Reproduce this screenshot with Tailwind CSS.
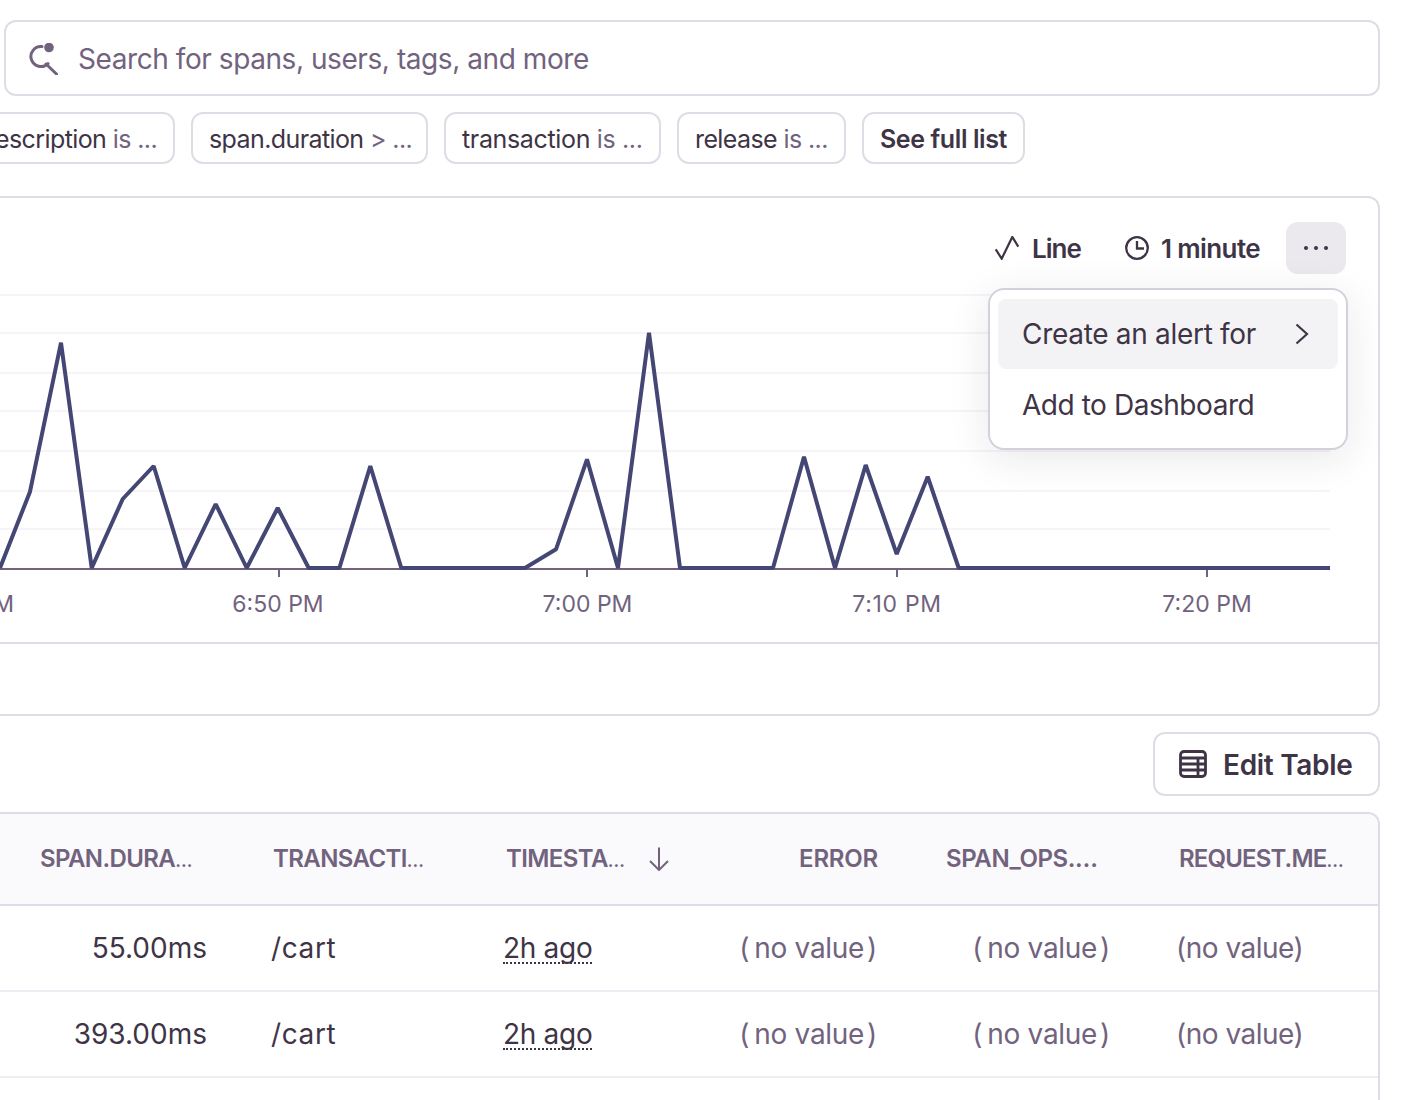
<!DOCTYPE html>
<html>
<head>
<meta charset="utf-8">
<script src="https://cdn.jsdelivr.net/npm/@tailwindcss/browser@4"></script>
</head>
<body class="bg-white">
<div class="relative w-[1428px] h-[1100px] overflow-hidden bg-white pt-5 pr-12 font-[Inter,sans-serif] text-[#3e3446] flex flex-col">
  <div class="ml-1 h-[76px] shrink-0 border-2 border-[#e0dce5] rounded-xl flex items-center pl-[22px] text-[28px] text-[#71637e] tracking-[-0.43px]">
    <svg class="w-[30px] h-[32px] mr-[20px] mt-[1px]" viewBox="0 0 30 32" fill="none" stroke="#71637e" stroke-width="3" stroke-linecap="round"><path d="M14 3.6A10 10 0 1 0 20 20.6"/><path d="M18 21 28.5 31"/><circle cx="21" cy="4.5" r="4.8" fill="#71637e" stroke="none"/></svg>
    <span class="relative top-[1px]">Search for spans, users, tags, and more</span>
  </div>
  <div class="mt-4 mr-[355px] h-[52px] shrink-0 flex justify-end gap-4 text-[25px] leading-[48px]">
    <div class="w-[300px] shrink-0 border-2 border-[#e0dce5] rounded-xl flex items-center justify-end pr-4 pt-[1px] whitespace-nowrap tracking-[-0.6px]"><span>description&nbsp;</span><span class="text-[#71637e]">is ...</span></div>
    <div class="w-[237px] shrink-0 border-2 border-[#e0dce5] rounded-xl flex items-center pl-4 pt-[1px] whitespace-nowrap tracking-[-0.6px]"><span>span.duration&nbsp;</span><span class="text-[#71637e]">&gt; ...</span></div>
    <div class="w-[217px] shrink-0 border-2 border-[#e0dce5] rounded-xl flex items-center pl-4 pt-[1px] whitespace-nowrap tracking-[-0.35px]"><span>transaction&nbsp;</span><span class="text-[#71637e]">is ...</span></div>
    <div class="w-[169px] shrink-0 border-2 border-[#e0dce5] rounded-xl flex items-center pl-4 pt-[1px] whitespace-nowrap tracking-[-0.6px]"><span>release&nbsp;</span><span class="text-[#71637e]">is ...</span></div>
    <div class="w-[163px] shrink-0 border-2 border-[#e0dce5] rounded-xl flex items-center justify-center pt-[1px] whitespace-nowrap font-semibold tracking-[-0.4px]">See full list</div>
  </div>
  <div class="relative mt-8 -ml-5 h-[520px] shrink-0 border-2 border-[#e0dce5] rounded-xl flex flex-col">
    <div class="h-[92px] shrink-0 flex justify-end items-start pt-6 pr-8 text-[26px] font-semibold">
      <div class="h-[52px] flex items-center gap-[13px]"><svg class="w-6 h-6" viewBox="0 0 24 24" fill="none" stroke="#3e3446" stroke-width="2.2"><path d="M0.7 13.3 6.7 22.7 17.3 0.9 23.3 10.7"/></svg><span class="tracking-[-1px]">Line</span></div>
      <div class="ml-[44px] h-[52px] flex items-center gap-3"><svg class="w-6 h-6" viewBox="0 0 24 24" fill="none" stroke="#3e3446" stroke-width="2.3"><circle cx="12" cy="12" r="10.8"/><path d="M12 5V12.5H19"/></svg><span class="tracking-[-0.6px]">1 minute</span></div>
      <div class="ml-[26px] w-[60px] h-[52px] rounded-xl bg-[#ebe9ee] flex items-center justify-center gap-[6px]"><i class="w-1 h-1 rounded-full bg-[#3e3446]"></i><i class="w-1 h-1 rounded-full bg-[#3e3446]"></i><i class="w-1 h-1 rounded-full bg-[#3e3446]"></i></div>
    </div>
    <svg class="block shrink-0" width="1396" height="352" viewBox="-18 290 1396 352" fill="none" font-size="23" style="font-family:Inter,sans-serif">
      <g stroke="#f6f4f8" stroke-width="2">
        <path d="M-18 295H1330M-18 333H1330M-18 373H1330M-18 411H1330M-18 451H1330M-18 491H1330M-18 529H1330"/>
      </g>
      <path d="M-18 569H1330M279 569V577M587 569V577M897 569V577M1207 569V577" stroke="#71637e" stroke-width="2"/>
      <polyline stroke="#444674" stroke-width="4" stroke-linejoin="bevel" points="0,568 30,491.7 61,342.7 91.7,568 122.7,499 153.7,466 184.7,568 215.7,504 246.7,568 277.7,508 308.7,568 339.4,568 370.3,466 401.3,568 525,568 556,549.3 587,459.3 618,568 649,332.7 680,568 773,568 804,456.7 835,568 865.7,465 896.7,554 927.7,476.7 958.7,568 1330,568"/>
      <g fill="#71637e" text-anchor="middle">
        <text x="-32" y="612">6:40 PM</text>
        <text x="278" y="612">6:50 PM</text>
        <text x="587.5" y="612">7:00 PM</text>
        <text x="897" y="612" class="tracking-[0.7px]">7:10 PM</text>
        <text x="1207" y="612">7:20 PM</text>
      </g>
    </svg>
    <div class="flex-1 border-t-2 border-[#e0dce5]"></div>
    <div class="absolute left-[1006px] top-[90px] w-[360px] h-[162px] bg-white border-2 border-[#d5d0dc] rounded-2xl px-2 py-[9px] shadow-[0_8px_40px_rgba(43,34,51,0.10)] text-[28px] tracking-[-0.3px]">
      <div class="h-[70px] rounded-lg bg-[#f3f2f5] flex items-center justify-between pl-[24px] pr-[29px]">
        <span>Create an alert for</span>
        <svg class="w-[14px] h-[22px]" viewBox="0 0 14 22" fill="none" stroke="#3e3446" stroke-width="2.2"><path d="M1.5 1.5 12 11 1.5 20.5"/></svg>
      </div>
      <div class="h-[71px] flex items-center pl-[24px]"><span class="tracking-[-0.45px]">Add to Dashboard</span></div>
    </div>
  </div>
  <div class="mt-4 h-16 shrink-0 self-end w-[227px] border-2 border-[#e0dce5] rounded-xl flex items-center pl-[24px] gap-[16px] text-[28px] font-semibold">
    <svg class="w-[28px] h-[28px]" viewBox="0 0 28 28" fill="none" stroke="#3e3446" stroke-width="2.8"><rect x="1.5" y="1.5" width="25" height="25" rx="3.5"/><path d="M1.5 8H26.5M1.5 14H26.5M1.5 20H26.5M19 8V26.5"/></svg>
    <span class="tracking-[-0.3px] relative top-[1px]">Edit Table</span>
  </div>
  <div class="mt-4 -ml-5 flex-1 border-2 border-b-0 border-[#e0dce5] rounded-t-xl overflow-hidden">
    <div class="grid grid-cols-[34px_233px_233px_233px_207px_233px_223px] h-[92px] bg-[#faf9fb] border-b-2 border-[#e0dce5] items-center text-[24px] font-semibold text-[#71637e] whitespace-nowrap tracking-[-0.6px]">
      <div></div>
      <div class="pl-6">SPAN.DURA<span class="text-[18px]">…</span></div>
      <div class="pl-6">TRANSACTI<span class="text-[18px]">…</span></div>
      <div class="pl-6 flex items-center"><span>TIMESTA<span class="text-[18px]">…</span></span><svg class="ml-[25px] w-5 h-6" viewBox="0 0 20 24" fill="none" stroke="#71637e" stroke-width="2"><path d="M10 0.5V23M1 14 10 23 19 14"/></svg></div>
      <div class="text-right pr-[44px] tracking-[-0.2px]">ERROR</div>
      <div class="pl-6 tracking-[-0.4px]">SPAN_OPS.…</div>
      <div class="pl-6 tracking-[-0.85px]">REQUEST.ME<span class="text-[18px]">…</span></div>
    </div>
    <div class="grid grid-cols-[34px_233px_233px_233px_207px_233px_223px] h-[86px] border-b-2 border-[#f0ecf3] items-center text-[28px] whitespace-nowrap">
      <div></div>
      <div class="text-right pr-[42px]">55.00ms</div>
      <div class="pl-[22px] tracking-[0.6px]">/cart</div>
      <div class="pl-[21px] tracking-[-0.3px]"><span class="border-b-2 border-dotted border-[#3e3446] inline-block leading-[27px]">2h ago</span></div>
      <div class="text-right pr-[45px] text-[#71637e] tracking-[-0.3px]"><span class="mr-[5px]">(</span>no value<span class="ml-[3px]">)</span></div>
      <div class="text-right pr-[45px] text-[#71637e] tracking-[-0.3px]"><span class="mr-[5px]">(</span>no value<span class="ml-[3px]">)</span></div>
      <div class="pl-[21px] text-[#71637e] tracking-[-0.5px]">(no value)</div>
    </div>
    <div class="grid grid-cols-[34px_233px_233px_233px_207px_233px_223px] h-[86px] border-b-2 border-[#f0ecf3] items-center text-[28px] whitespace-nowrap">
      <div></div>
      <div class="text-right pr-[42px]">393.00ms</div>
      <div class="pl-[22px] tracking-[0.6px]">/cart</div>
      <div class="pl-[21px] tracking-[-0.3px]"><span class="border-b-2 border-dotted border-[#3e3446] inline-block leading-[27px]">2h ago</span></div>
      <div class="text-right pr-[45px] text-[#71637e] tracking-[-0.3px]"><span class="mr-[5px]">(</span>no value<span class="ml-[3px]">)</span></div>
      <div class="text-right pr-[45px] text-[#71637e] tracking-[-0.3px]"><span class="mr-[5px]">(</span>no value<span class="ml-[3px]">)</span></div>
      <div class="pl-[21px] text-[#71637e] tracking-[-0.5px]">(no value)</div>
    </div>
  </div>
</div>
</body>
</html>
